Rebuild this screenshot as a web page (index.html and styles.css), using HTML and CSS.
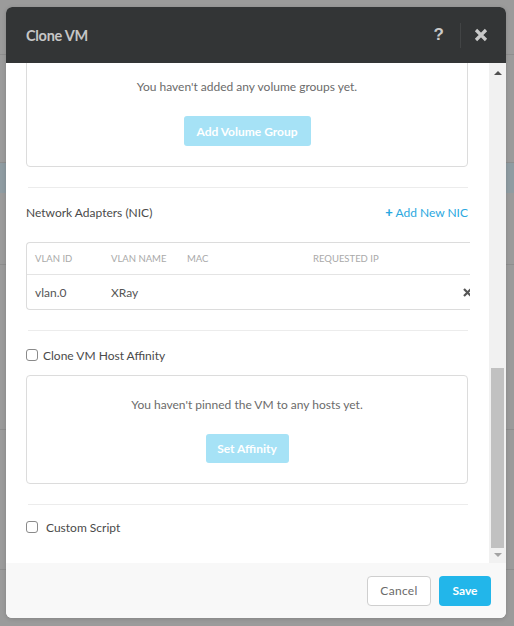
FILE: index.html
```html
<!DOCTYPE html>
<html>
<head>
<meta charset="utf-8">
<link rel="stylesheet" href="styles.css">
</head>
<body>
<div class="backdrop">
  <div class="bg-row r1"></div>
  <div class="bg-row r2"></div>
  <div class="bg-row r3"></div>
  <div class="bg-row r4"></div>
  <div class="bg-row r5"></div>
  <div class="bg-row r6"></div>
</div>
<div class="modal">
  <div class="modal-header">
    <div class="title">Clone VM</div>
    <div class="header-actions">
      <span class="help">?</span>
      <span class="sep"></span>
      <svg class="close" width="14" height="14" viewBox="0 0 14 14"><path d="M2 2 L12 12 M12 2 L2 12" stroke="#c9c9c9" stroke-width="3.2" stroke-linecap="butt"/></svg>
    </div>
  </div>
  <div class="modal-body">
    <div class="content">
      <div class="empty-box vg-box">
        <div class="empty-text">You haven't added any volume groups yet.</div>
        <div class="btn-light vg-btn">Add Volume Group</div>
      </div>
      <div class="divider"></div>
      <div class="section-head">
        <div class="section-title">Network Adapters (NIC)</div>
        <div class="link"><span class="plus">+</span> Add New NIC</div>
      </div>
      <div class="table">
        <div class="trow thead">
          <div class="c1">VLAN ID</div>
          <div class="c2">VLAN NAME</div>
          <div class="c3">MAC</div>
          <div class="c4">REQUESTED IP</div>
        </div>
        <div class="trow tbody">
          <div class="c1">vlan.0</div>
          <div class="c2">XRay</div>
          <div class="c3"></div>
          <div class="c4"></div>
          <svg class="rm" width="9" height="9" viewBox="0 0 9 9"><path d="M1 1 L8 8 M8 1 L1 8" stroke="#555" stroke-width="2.2"/></svg>
        </div>
      </div>
      <div class="divider d2"></div>
      <label class="check-row"><span class="cb"></span><span class="cb-label">Clone VM Host Affinity</span></label>
      <div class="empty-box aff-box">
        <div class="empty-text">You haven't pinned the VM to any hosts yet.</div>
        <div class="btn-light aff-btn">Set Affinity</div>
      </div>
      <div class="divider d3"></div>
      <label class="check-row cs-row"><span class="cb"></span><span class="cb-label cs-label">Custom Script</span></label>
    </div>
    <div class="scrollbar">
      <div class="arrow up"></div>
      <div class="track"><div class="thumb"></div></div>
      <div class="arrow down"></div>
    </div>
  </div>
  <div class="modal-footer">
    <div class="btn cancel">Cancel</div>
    <div class="btn save">Save</div>
  </div>
</div>
</body>
</html>
```
FILE: styles.css
```css
* { box-sizing: border-box; }
html, body { margin: 0; padding: 0; }
body {
  width: 514px;
  height: 626px;
  background: #9b9b9b;
  font-family: Lato, "Open Sans", sans-serif;
  position: relative;
  overflow: hidden;
}
.backdrop { display: flex; flex-direction: column; }
.bg-row { border-bottom: 1px solid #8e8e8e; }
.r1 { height: 55px; }
.r2 { height: 108px; }
.r3 { height: 30px; background: #8f9ca2; border-bottom: none; }
.r4 { height: 72px; }
.r5 { height: 165px; }
.r6 { height: 140px; }

.modal {
  position: absolute;
  left: 6px;
  top: 7px;
  width: 500px;
  height: 611px;
  background: #fff;
  border-radius: 6px;
  display: flex;
  flex-direction: column;
  overflow: hidden;
  box-shadow: 0 1px 4px rgba(0,0,0,0.15);
}
.modal-header {
  height: 56px;
  flex: none;
  background: #333536;
  display: flex;
  align-items: center;
  justify-content: space-between;
  padding: 0 18px 0 20px;
}
.title {
  color: #c6c6c6;
  font-weight: 700;
  font-size: 14.5px;
  letter-spacing: -0.3px;
}
.header-actions { display: flex; align-items: center; }
.help {
  color: #c9c9c9;
  font-weight: 900;
  font-size: 17px;
  font-family: "Liberation Sans", sans-serif;
}
.sep {
  width: 1px;
  height: 25px;
  background: #424445;
  margin: 0 13px 0 16px;
}
.close { display: block; }

.modal-body {
  flex: 1;
  display: flex;
  overflow: hidden;
}
.content {
  flex: 1;
  padding: 0 21px 0 20px;
  overflow: hidden;
}
.empty-box {
  border: 1px solid #dcdcdc;
  border-radius: 4px;
  display: flex;
  flex-direction: column;
  align-items: center;
}
.vg-box {
  margin-top: -14px;
  padding: 27px 0 20px;
}
.empty-text {
  color: #6b6b6b;
  font-size: 12px;
  line-height: 20px;
}
.btn-light {
  background: #a6e2f6;
  color: #fff;
  font-weight: 700;
  font-size: 12px;
  border-radius: 3px;
  display: flex;
  align-items: center;
  justify-content: center;
}
.vg-btn { margin-top: 19px; width: 127px; height: 30px; }
.divider {
  height: 1px;
  background: #ececec;
  margin: 20px 0 0 2px;
}
.section-head {
  display: flex;
  justify-content: space-between;
  align-items: center;
  margin-top: 14px;
  height: 20px;
}
.section-title { color: #4a4a4a; font-size: 12px; }
.link { color: #2aa8e0; font-size: 12px; }
.plus { font-weight: 900; font-size: 13px; }
.table {
  margin-top: 20px;
  width: 444px;
  border: 1px solid #dcdcdc;
  border-right: none;
  border-radius: 4px 0 0 4px;
  overflow: hidden;
}
.trow {
  display: flex;
  align-items: center;
  padding-left: 8px;
  position: relative;
}
.thead {
  height: 32px;
  border-bottom: 1px solid #e4e4e4;
  color: #a9a9a9;
  font-size: 9.5px;
}
.tbody {
  height: 34px;
  color: #555;
  font-size: 12px;
}
.c1 { width: 76px; }
.c2 { width: 76px; }
.c3 { width: 126px; }
.c4 { width: 100px; }
.rm { position: absolute; right: -2px; top: 13px; }

.d2 { margin-top: 20px; }
.check-row {
  display: flex;
  align-items: center;
  margin-top: 14px;
  height: 20px;
}
.cb {
  width: 12px;
  height: 12px;
  border: 1px solid #8a8a8a;
  border-radius: 3px;
  margin-right: 5px;
  flex: none;
}
.cb-label { color: #4a4a4a; font-size: 12px; }
.cs-label { margin-left: 3px; }
.aff-box {
  margin-top: 10px;
  padding: 19px 0 20px;
}
.aff-btn { margin-top: 19px; width: 83px; height: 29px; }
.d3 { margin-top: 20px; }
.cs-row { margin-top: 12px; }

.scrollbar {
  width: 17px;
  flex: none;
  background: #f1f1f1;
  display: flex;
  flex-direction: column;
  align-items: center;
}
.arrow {
  width: 0;
  height: 0;
  border-left: 4px solid transparent;
  border-right: 4px solid transparent;
  flex: none;
}
.arrow.up { border-bottom: 4px solid #505050; margin-top: 8px; }
.arrow.down { border-top: 4px solid #a3a3a3; margin-bottom: 6px; margin-top: 5px; }
.track {
  flex: 1;
  width: 100%;
  display: flex;
  flex-direction: column;
  justify-content: flex-end;
  align-items: center;
}
.thumb {
  width: 13px;
  height: 180px;
  background: #c1c1c1;
}

.modal-footer {
  height: 55px;
  flex: none;
  background: #f8f8f8;
  display: flex;
  justify-content: flex-end;
  align-items: center;
  padding-right: 15px;
  gap: 8px;
}
.btn {
  height: 30px;
  border-radius: 4px;
  display: flex;
  align-items: center;
  justify-content: center;
  font-size: 12px;
}
.cancel {
  width: 64px;
  background: #fff;
  border: 1px solid #cfcfcf;
  color: #6a6a6a;
  letter-spacing: 0.3px;
}
.save {
  width: 52px;
  background: #22b6ea;
  color: #fff;
  font-weight: 700;
}
```
